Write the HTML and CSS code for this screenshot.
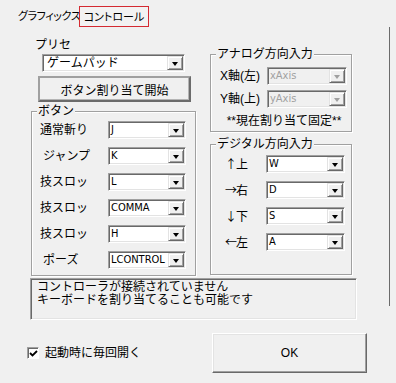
FILE: index.html
```html
<!DOCTYPE html>
<html lang="ja">
<head>
    <meta charset="UTF-8">
    <title>コントロール設定</title>
    <link rel="stylesheet" href="styles.css">
</head>
<body>
    <div class="tabs">
        <span class="tab">グラフィックス</span>
        <span class="tab tab-active">コントロール</span>
    </div>

    <div class="sheet">
        <div class="cols">
            <div class="col-left">
                <div class="caption">プリセ</div>
                <div class="combo combo-preset"><span class="value">ゲームパッド</span><span class="drop"></span></div>
                <button class="btn btn-assign">ボタン割り当て開始</button>

                <fieldset class="group group-buttons">
                    <legend>ボタン</legend>
                    <div class="rows">
                        <div class="row"><span class="row-label">通常斬り</span><div class="combo"><span class="value">J</span><span class="drop"></span></div></div>
                        <div class="row"><span class="row-label indent">ジャンプ</span><div class="combo"><span class="value">K</span><span class="drop"></span></div></div>
                        <div class="row"><span class="row-label">技スロッ</span><div class="combo"><span class="value">L</span><span class="drop"></span></div></div>
                        <div class="row"><span class="row-label">技スロッ</span><div class="combo"><span class="value">COMMA</span><span class="drop"></span></div></div>
                        <div class="row"><span class="row-label">技スロッ</span><div class="combo"><span class="value">H</span><span class="drop"></span></div></div>
                        <div class="row"><span class="row-label indent">ポーズ</span><div class="combo"><span class="value">LCONTROL</span><span class="drop"></span></div></div>
                    </div>
                </fieldset>
            </div>

            <div class="col-right">
                <fieldset class="group group-analog">
                    <legend>アナログ方向入力</legend>
                    <div class="rows">
                        <div class="row"><span class="row-label">X軸(左)</span><div class="combo disabled"><span class="value">xAxis</span><span class="drop"></span></div></div>
                        <div class="row"><span class="row-label">Y軸(上)</span><div class="combo disabled"><span class="value">yAxis</span><span class="drop"></span></div></div>
                    </div>
                    <div class="note">**現在割り当て固定**</div>
                </fieldset>

                <fieldset class="group group-digital">
                    <legend>デジタル方向入力</legend>
                    <div class="rows">
                        <div class="row"><span class="row-label dir">↑上</span><div class="combo"><span class="value">W</span><span class="drop"></span></div></div>
                        <div class="row"><span class="row-label dir">→右</span><div class="combo"><span class="value">D</span><span class="drop"></span></div></div>
                        <div class="row"><span class="row-label dir">↓下</span><div class="combo"><span class="value">S</span><span class="drop"></span></div></div>
                        <div class="row"><span class="row-label dir">←左</span><div class="combo"><span class="value">A</span><span class="drop"></span></div></div>
                    </div>
                </fieldset>
            </div>
        </div>

        <div class="status">コントローラが接続されていません<br>キーボードを割り当てることも可能です</div>
    </div>

    <div class="footer">
        <label class="check">
            <span class="check-box">
                <svg width="9" height="9" viewBox="0 0 9 9"><path d="M1 4 L3.5 6.5 L8 2" fill="none" stroke="#000" stroke-width="1.8"/></svg>
            </span>
            起動時に毎回開く
        </label>
        <button class="btn btn-ok">OK</button>
    </div>
</body>
</html>
```

FILE: styles.css
```css
html, body {
    margin: 0;
    padding: 0;
    width: 396px;
    height: 383px;
    background: #f0f0f0;
    overflow: hidden;
}
body {
    font-family: "Liberation Sans", "Noto Sans CJK JP", sans-serif;
    font-size: 12px;
    line-height: 14px;
    color: #000;
}

/* tab strip */
.tabs {
    display: flex;
    align-items: flex-end;
    height: 27px;
    padding-left: 16px;
}
.tab {
    box-sizing: border-box;
    flex: none;
    width: 63px;
    padding: 0 0 4px 2px;
    font-size: 11px;
    font-feature-settings: "palt";
    letter-spacing: -0.4px;
    white-space: nowrap;
}
.tab-active {
    width: 70px;
    height: 21px;
    padding: 3px 0 0;
    text-align: center;
    letter-spacing: 0;
    border: 1px solid #d42a32;
    background: #f2f2f2;
}

/* page of the tab */
.sheet {
    box-sizing: border-box;
    width: 390px;
    height: 279px;
    padding: 11px 0 0 31px;
    border-right: 1px solid #6b6b6b;
}
.cols {
    display: flex;
    gap: 14px;
}
.col-left {
    width: 165px;
    display: flex;
    flex-direction: column;
    align-items: flex-start;
}
.col-right {
    width: 142px;
    padding-top: 9px;
}
.caption {
    padding-left: 4px;
    height: 14px;
}

/* combo box */
.combo {
    box-sizing: border-box;
    display: flex;
    align-items: center;
    width: 78px;
    height: 18px;
    border: 1px solid;
    border-color: #a0a0a0 #fff #fff #a0a0a0;
    box-shadow: inset 1px 1px 0 #696969, inset -1px -1px 0 #e3e3e3;
    background: #fff;
    font-family: "DejaVu Sans Condensed", "Liberation Sans Narrow", "Liberation Sans", "Noto Sans CJK JP", sans-serif;
    font-size: 11px;
}
.combo .value {
    flex: 1;
    padding-left: 2px;
    white-space: nowrap;
    overflow: hidden;
}
.drop {
    box-sizing: border-box;
    position: relative;
    width: 16px;
    height: 14px;
    margin-right: 1px;
    background: #f0f0f0;
    border: 1px solid;
    border-color: #e3e3e3 #696969 #696969 #e3e3e3;
    box-shadow: inset 1px 1px 0 #fff, inset -1px -1px 0 #a0a0a0;
}
.drop::after {
    content: "";
    position: absolute;
    left: 4px;
    top: 5px;
    border-left: 3.5px solid transparent;
    border-right: 3.5px solid transparent;
    border-top: 4px solid #000;
}
.combo.disabled {
    background: #f0f0f0;
    color: #a0a0a0;
}
.combo.disabled .drop::after {
    border-top-color: #a0a0a0;
}
.combo-preset {
    width: 143px;
    margin: 2px 0 0 11px;
    font-family: "Liberation Sans", "Noto Sans CJK JP", sans-serif;
    font-size: 12px;
}
.combo-preset .value {
    padding-left: 4px;
}

/* buttons */
.btn {
    box-sizing: border-box;
    background: #f0f0f0;
    font-family: "Liberation Sans", "Noto Sans CJK JP", sans-serif;
    font-size: 12px;
    color: #000;
    padding: 0;
}
.btn-assign {
    width: 153px;
    height: 26px;
    margin: 4px 0 0 7px;
    border: 2px solid;
    border-color: #a0a0a0 #6b6b6b #6b6b6b #a0a0a0;
    box-shadow: inset -1px -1px 0 #b4b4b4;
}
.btn-ok {
    width: 155px;
    height: 40px;
    border: 1px solid;
    border-color: #fff #696969 #696969 #fff;
    box-shadow: inset -1px -1px 0 #a0a0a0, inset 1px 1px 0 #e3e3e3;
}

/* group boxes */
.group {
    box-sizing: border-box;
    margin: 0;
    padding: 0;
    min-inline-size: 0;
    width: 100%;
    border: 1px solid #a0a0a0;
    box-shadow: inset 1px 1px 0 #fff, 1px 1px 0 #fff;
}
.group legend {
    margin-left: 5px;
    padding: 0 1px;
    height: 14px;
    background: #f0f0f0;
}
.group-buttons {
    margin-top: 2px;
}
.group-buttons .rows {
    padding: 3px 9px 6px 8px;
}
.rows {
    display: flex;
    flex-direction: column;
    gap: 8px;
}
.row {
    display: flex;
    align-items: center;
    justify-content: space-between;
    height: 18px;
}
.row-label {
    white-space: nowrap;
}
.indent {
    padding-left: 3px;
}
.dir {
    font-family: "Noto Sans CJK JP", sans-serif;
    letter-spacing: -1px;
}
.group-analog .rows {
    gap: 5px;
    padding: 6px 4px 0 9px;
}
.group-analog .combo {
    width: 80px;
}
.note {
    margin-top: 6px;
    padding-bottom: 3px;
    text-align: center;
    padding-left: 6px;
}
.group-digital {
    margin-top: 5px;
}
.group-digital .rows {
    padding: 4px 6px 23px 14px;
}
.group-digital .combo {
    width: 79px;
}

/* status message */
.status {
    box-sizing: border-box;
    width: 327px;
    height: 42px;
    margin: 2px 0 0 -1px;
    padding: 2px 6px;
    line-height: 13px;
    border: 1px solid;
    border-color: #a0a0a0 #fff #fff #a0a0a0;
    box-shadow: inset 1px 1px 0 #696969, inset -1px -1px 0 #e3e3e3;
}

/* footer */
.footer {
    display: flex;
    justify-content: space-between;
    align-items: center;
    padding: 27px 29px 0 27px;
}
.check {
    display: flex;
    align-items: center;
    gap: 6px;
}
.check-box {
    box-sizing: border-box;
    display: flex;
    align-items: center;
    justify-content: center;
    width: 12px;
    height: 12px;
    background: #fff;
    border: 1px solid;
    border-color: #a0a0a0 #fff #fff #a0a0a0;
    box-shadow: inset 1px 1px 0 #696969;
}
```
